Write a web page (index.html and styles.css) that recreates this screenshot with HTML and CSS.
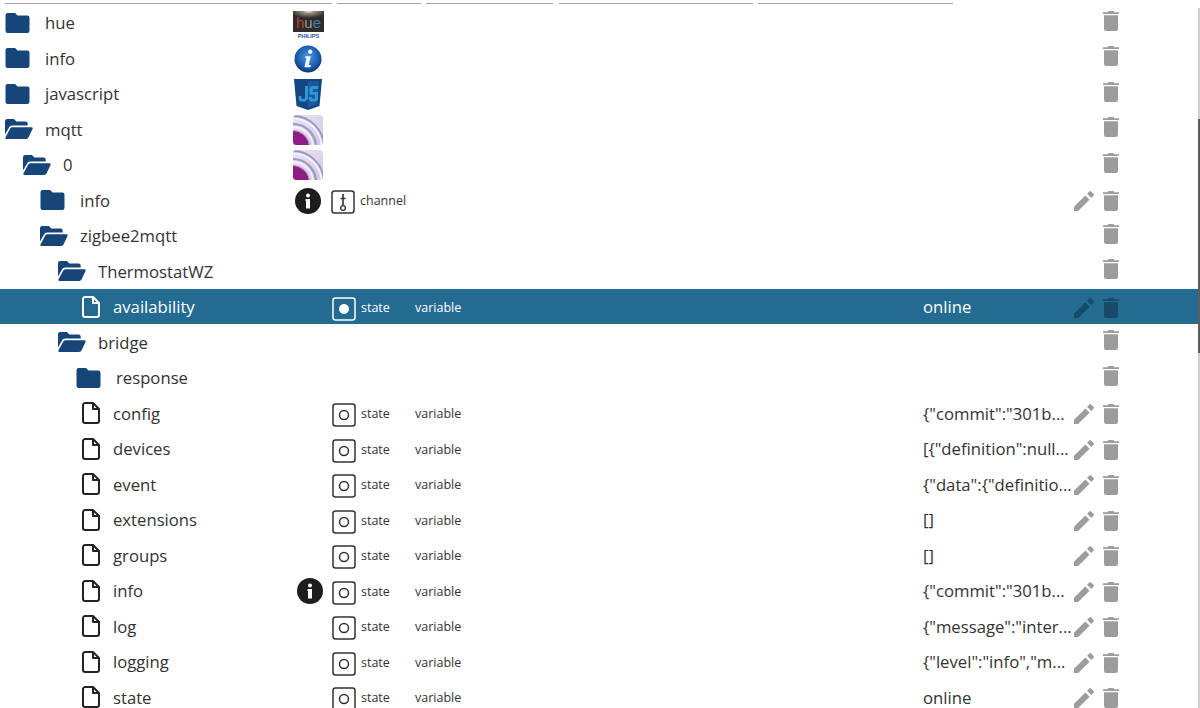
FILE: index.html
```html
<!DOCTYPE html>
<html lang="en">
<head>
<meta charset="utf-8">
<title>Objects</title>
<link rel="stylesheet" href="styles.css">
</head>
<body>
<svg class="defs" width="0" height="0" aria-hidden="true">
  <defs>
    <linearGradient id="mq" x1="0" y1="0" x2="1" y2="1"><stop offset="0" stop-color="#e9e6f3"/><stop offset="1" stop-color="#cfc9e3"/></linearGradient>
    <clipPath id="mqc"><rect width="30" height="30" rx="3.500"/></clipPath>
    <symbol id="folder" viewBox="0 0 24 20"><path d="M2.2 0H9.6l2.4 2.6H21.8A2.2 2.2 0 0 1 24 4.8V17.8A2.2 2.2 0 0 1 21.8 20H2.2A2.2 2.2 0 0 1 0 17.8V2.2A2.2 2.2 0 0 1 2.2 0Z"/></symbol>
    <symbol id="folder-open" viewBox="0 0 28 20"><path d="M0 15.5V2.2A2.2 2.2 0 0 1 2.2 0H9l2.4 2.5H20.5A2.2 2.2 0 0 1 22.7 4.700V6.500H7.200A3.500 3.500 0 0 0 4 8.500Z"/><path d="M7.600 8.200H26.300A1.300 1.300 0 0 1 27.500 10L23.500 18.600A2.600 2.600 0 0 1 21.200 20H1.500A1.200 1.200 0 0 1 .5 18.200L5.300 9.500A2.700 2.700 0 0 1 7.600 8.200Z"/></symbol>
    <symbol id="file" viewBox="0 0 18 22"><path d="M11 1H3.200A2.200 2.200 0 0 0 1 3.200V18.800A2.200 2.200 0 0 0 3.200 21H14.800A2.200 2.200 0 0 0 17 18.800V7ZM11 1V7H17" fill="none" stroke="currentColor" stroke-width="2" stroke-linejoin="round"/></symbol>
    <symbol id="trash" viewBox="0 0 16 20"><path d="M5.500 0H10.500L11.300 1.200H16V2.900H0V1.200H4.700Z"/><path d="M1 4.200H15V17.800A2.200 2.200 0 0 1 12.800 20H3.200A2.200 2.200 0 0 1 1 17.800Z"/></symbol>
    <symbol id="pencil" viewBox="0 0 21 21"><path d="M0 16.600V21H4.400L16.300 9.100 11.900 4.700Z"/><path d="M20.600 4.800A1.200 1.200 0 0 0 20.600 3.100L17.900.4A1.200 1.200 0 0 0 16.200.4L13.700 2.900 18.100 7.300Z"/></symbol>
    <symbol id="info" viewBox="0 0 26 26"><circle cx="13" cy="13" r="13" fill="#1d1d1d"/><circle cx="13" cy="7.500" r="2" fill="#fff"/><path d="M10.500 11H15V20.500H11V13H10.500Z" fill="#fff"/></symbol>
    <symbol id="state" viewBox="0 0 24 24"><rect x="1" y="1" width="22" height="22" rx="2.500" fill="none" stroke="currentColor" stroke-width="1.500"/><circle cx="12" cy="12" r="4.500" fill="none" stroke="currentColor" stroke-width="1.500"/></symbol>
    <symbol id="state-on" viewBox="0 0 24 24"><rect x="1" y="1" width="22" height="22" rx="2.500" fill="none" stroke="currentColor" stroke-width="1.500"/><circle cx="12" cy="12" r="5" fill="currentColor"/></symbol>
    <symbol id="channel" viewBox="0 0 24 24"><rect x="1" y="1" width="22" height="22" rx="2.500" fill="none" stroke="currentColor" stroke-width="1.500"/><circle cx="12" cy="18" r="2.300" fill="none" stroke="currentColor" stroke-width="1.300"/><path d="M12 4V15.500M9.500 8.500H14.500" fill="none" stroke="currentColor" stroke-width="1.600"/></symbol>
    <symbol id="mqtt" viewBox="0 0 30 30">
      <g clip-path="url(#mqc)">
        <rect width="30" height="30" fill="url(#mq)"/>
        <circle cx="0" cy="32" r="31" fill="none" stroke="#9d95c2" stroke-width="1.800"/>
        <circle cx="0" cy="32" r="28.500" fill="none" stroke="#f6f4fb" stroke-width="1.600"/>
        <circle cx="0" cy="32" r="23" fill="none" stroke="#a096c4" stroke-width="2.200"/>
        <circle cx="0" cy="32" r="20" fill="none" stroke="#f3f1f9" stroke-width="1.800"/>
        <circle cx="0" cy="32" r="16" fill="#8d1f84"/>
        <circle cx="0" cy="32" r="16.500" fill="none" stroke="#b78fc4" stroke-width="1"/>
      </g>
    </symbol>
  </defs>
</svg>
<div class="page">
  <div class="head">
    <span class="col-a"></span><span class="col-b"></span><span class="col-c"></span><span class="col-d"></span><span class="col-e"></span>
  </div>
  <div class="tree">
    <div class="row lv0">
      <svg class="ico folder"><use href="#folder"/></svg><span class="name">hue</span>
      <span class="logo">
        <svg class="logo-hue" viewBox="0 0 31 28"><defs><radialGradient id="lamp" cx=".5" cy="0" r=".6"><stop offset="0" stop-color="#f4f1df"/><stop offset=".35" stop-color="#8f8a78"/><stop offset="1" stop-color="#2e2b29"/></radialGradient></defs><rect width="31" height="28" fill="#fbfbfd"/><rect width="31" height="21" fill="#2f2c2a"/><rect width="31" height="12" fill="url(#lamp)"/><text x="15.500" y="16.500" class="hue-word"><tspan class="h-h">h</tspan><tspan class="h-u">u</tspan><tspan class="h-e">e</tspan></text><text x="15.500" y="26.500" class="philips">PHILIPS</text></svg>
      </span>
      <span class="act"><svg class="trash"><use href="#trash"/></svg></span>
    </div>
    <div class="row lv0">
      <svg class="ico folder"><use href="#folder"/></svg><span class="name">info</span>
      <span class="logo">
        <svg class="logo-i" viewBox="0 0 28 28"><defs><radialGradient id="ball" cx=".5" cy=".42" r=".62"><stop offset="0" stop-color="#4a9be6"/><stop offset=".65" stop-color="#1a5cb0"/><stop offset="1" stop-color="#0c2a55"/></radialGradient></defs><circle cx="14" cy="14" r="13.500" fill="url(#ball)"/><path d="M16.200 4.500a2.200 2.200 0 1 0 .01 0ZM11.500 11.200H16.800L14.700 20H17L16.400 22.200H10.400L12.500 13H11Z" fill="#f2f6fb"/></svg>
      </span>
      <span class="act"><svg class="trash"><use href="#trash"/></svg></span>
    </div>
    <div class="row lv0">
      <svg class="ico folder"><use href="#folder"/></svg><span class="name">javascript</span>
      <span class="logo">
        <svg class="logo-js" viewBox="0 0 28 31"><path d="M0 0H28L25.500 27 14 31 2.500 27Z" fill="#14467f"/><path d="M14 2.500H25L23.300 25.500 14 28.500Z" fill="#1a5a9c"/><path d="M11 7H14V20L11.500 22.500H6L4.700 20V17H7.500V19.700H10.500L11 19ZM24 7V10H18.800V13H24V20.500L22 22.500H16.500L15 20.500V18H18V19.700H21V15.800H15.500V9L17.500 7Z" fill="#2e97d4"/></svg>
      </span>
      <span class="act"><svg class="trash"><use href="#trash"/></svg></span>
    </div>
    <div class="row lv0">
      <svg class="ico folder-open"><use href="#folder-open"/></svg><span class="name">mqtt</span>
      <span class="logo"><svg class="logo-mqtt"><use href="#mqtt"/></svg></span>
      <span class="act"><svg class="trash"><use href="#trash"/></svg></span>
    </div>
    <div class="row lv1">
      <svg class="ico folder-open"><use href="#folder-open"/></svg><span class="name">0</span>
      <span class="logo"><svg class="logo-mqtt"><use href="#mqtt"/></svg></span>
      <span class="act"><svg class="trash"><use href="#trash"/></svg></span>
    </div>
    <div class="row lv2 edit">
      <svg class="ico folder"><use href="#folder"/></svg><span class="name">info</span>
      <span class="logo"><svg class="badge"><use href="#info"/></svg></span>
      <span class="kind"><svg class="type"><use href="#channel"/></svg><span class="role">channel</span></span>
      <span class="act"><svg class="pencil"><use href="#pencil"/></svg><svg class="trash"><use href="#trash"/></svg></span>
    </div>
    <div class="row lv2">
      <svg class="ico folder-open"><use href="#folder-open"/></svg><span class="name">zigbee2mqtt</span>
      <span class="act"><svg class="trash"><use href="#trash"/></svg></span>
    </div>
    <div class="row lv3">
      <svg class="ico folder-open"><use href="#folder-open"/></svg><span class="name">ThermostatWZ</span>
      <span class="act"><svg class="trash"><use href="#trash"/></svg></span>
    </div>
    <div class="row lv4 edit selected">
      <svg class="ico file"><use href="#file"/></svg><span class="name">availability</span>
      <span class="kind"><svg class="type"><use href="#state-on"/></svg><span class="role">state</span><span class="vtype">variable</span></span>
      <span class="val">online</span>
      <span class="act"><svg class="pencil"><use href="#pencil"/></svg><svg class="trash"><use href="#trash"/></svg></span>
    </div>
    <div class="row lv3">
      <svg class="ico folder-open"><use href="#folder-open"/></svg><span class="name">bridge</span>
      <span class="act"><svg class="trash"><use href="#trash"/></svg></span>
    </div>
    <div class="row lv4b">
      <svg class="ico folder"><use href="#folder"/></svg><span class="name">response</span>
      <span class="act"><svg class="trash"><use href="#trash"/></svg></span>
    </div>
    <div class="row lv4 edit">
      <svg class="ico file"><use href="#file"/></svg><span class="name">config</span>
      <span class="kind"><svg class="type"><use href="#state"/></svg><span class="role">state</span><span class="vtype">variable</span></span>
      <span class="val">{"commit":"301b...</span>
      <span class="act"><svg class="pencil"><use href="#pencil"/></svg><svg class="trash"><use href="#trash"/></svg></span>
    </div>
    <div class="row lv4 edit">
      <svg class="ico file"><use href="#file"/></svg><span class="name">devices</span>
      <span class="kind"><svg class="type"><use href="#state"/></svg><span class="role">state</span><span class="vtype">variable</span></span>
      <span class="val">[{"definition":null...</span>
      <span class="act"><svg class="pencil"><use href="#pencil"/></svg><svg class="trash"><use href="#trash"/></svg></span>
    </div>
    <div class="row lv4 edit">
      <svg class="ico file"><use href="#file"/></svg><span class="name">event</span>
      <span class="kind"><svg class="type"><use href="#state"/></svg><span class="role">state</span><span class="vtype">variable</span></span>
      <span class="val">{"data":{"definitio...</span>
      <span class="act"><svg class="pencil"><use href="#pencil"/></svg><svg class="trash"><use href="#trash"/></svg></span>
    </div>
    <div class="row lv4 edit">
      <svg class="ico file"><use href="#file"/></svg><span class="name">extensions</span>
      <span class="kind"><svg class="type"><use href="#state"/></svg><span class="role">state</span><span class="vtype">variable</span></span>
      <span class="val">[]</span>
      <span class="act"><svg class="pencil"><use href="#pencil"/></svg><svg class="trash"><use href="#trash"/></svg></span>
    </div>
    <div class="row lv4 edit">
      <svg class="ico file"><use href="#file"/></svg><span class="name">groups</span>
      <span class="kind"><svg class="type"><use href="#state"/></svg><span class="role">state</span><span class="vtype">variable</span></span>
      <span class="val">[]</span>
      <span class="act"><svg class="pencil"><use href="#pencil"/></svg><svg class="trash"><use href="#trash"/></svg></span>
    </div>
    <div class="row lv4 edit">
      <svg class="ico file"><use href="#file"/></svg><span class="name">info</span>
      <span class="logo"><svg class="badge"><use href="#info"/></svg></span>
      <span class="kind"><svg class="type"><use href="#state"/></svg><span class="role">state</span><span class="vtype">variable</span></span>
      <span class="val">{"commit":"301b...</span>
      <span class="act"><svg class="pencil"><use href="#pencil"/></svg><svg class="trash"><use href="#trash"/></svg></span>
    </div>
    <div class="row lv4 edit">
      <svg class="ico file"><use href="#file"/></svg><span class="name">log</span>
      <span class="kind"><svg class="type"><use href="#state"/></svg><span class="role">state</span><span class="vtype">variable</span></span>
      <span class="val">{"message":"inter...</span>
      <span class="act"><svg class="pencil"><use href="#pencil"/></svg><svg class="trash"><use href="#trash"/></svg></span>
    </div>
    <div class="row lv4 edit">
      <svg class="ico file"><use href="#file"/></svg><span class="name">logging</span>
      <span class="kind"><svg class="type"><use href="#state"/></svg><span class="role">state</span><span class="vtype">variable</span></span>
      <span class="val">{"level":"info","m...</span>
      <span class="act"><svg class="pencil"><use href="#pencil"/></svg><svg class="trash"><use href="#trash"/></svg></span>
    </div>
    <div class="row lv4 edit">
      <svg class="ico file"><use href="#file"/></svg><span class="name">state</span>
      <span class="kind"><svg class="type"><use href="#state"/></svg><span class="role">state</span><span class="vtype">variable</span></span>
      <span class="val">online</span>
      <span class="act"><svg class="pencil"><use href="#pencil"/></svg><svg class="trash"><use href="#trash"/></svg></span>
    </div>
  </div>
</div>
<div class="scrollbar"><div class="thumb"></div></div>
</body>
</html>
```

FILE: styles.css
```css
* { box-sizing: border-box; }
html, body { margin: 0; height: 100%; overflow: hidden; background: #fff; }
body { font-family: "Open Sans", "Noto Sans", sans-serif; color: #333; }
.defs { position: absolute; }
.page { height: 708px; width: 1198px; overflow: hidden; }
.scrollbar { position: absolute; top: 8px; bottom: 0; right: 0; width: 2px; background: #cdcdcd; }
.thumb { margin-top: 111px; height: 234px; background: #5c5c5c; }
.head { display: flex; height: 4.900px; padding: 3px 0 0 5px; }
.head span { height: 1px; background: #a6a6a6; margin-right: 5px; }
.col-a { width: 327px; }
.col-b { width: 84px; }
.head .col-c { width: 127px; margin-right: 6px; }
.col-d { width: 194px; }
.col-e { width: 195px; }
.tree { display: grid; grid-auto-rows: 35.5px; }
.row { position: relative; display: flex; align-items: center; font-size: 16.700px; line-height: 1.200; }
.lv0 { padding-left: 5px; }
.lv1 { padding-left: 23px; }
.lv2 { padding-left: 40px; }
.lv3 { padding-left: 58px; }
.lv4 { padding-left: 82px; }
.lv4b { padding-left: 76px; }
.ico { flex: none; fill: #164679; color: #222; }
.folder { width: 25px; height: 20px; margin-right: 15px; }
.folder-open { width: 28px; height: 20px; margin-right: 12px; }
.file { width: 18px; height: 22px; margin-right: 13px; }
.name { white-space: nowrap; margin-top: 1px; }
.logo { position: absolute; left: 290px; top: 0; width: 36px; height: 100%; display: flex; align-items: center; justify-content: center; }
.lv4 .logo { left: 292px; }
.logo-hue { width: 31px; height: 28px; margin-top: 4px; }
.logo-i { width: 28px; height: 28px; margin-top: 1px; }
.logo-js { width: 28px; height: 31px; margin-top: 1px; }
.logo-mqtt { width: 30px; height: 30px; margin-top: 1px; }
.badge { width: 26px; height: 26px; margin-top: 1px; }
.hue-word { font-family: "Liberation Sans", sans-serif; font-size: 15px; text-anchor: middle; }
.h-h { fill: #b5443c; }
.h-u { fill: #8f9c84; }
.h-e { fill: #3f7fb5; }
.philips { font-family: "Liberation Sans", sans-serif; font-size: 5.500px; font-weight: 700; fill: #1f56a0; text-anchor: middle; }
.kind { position: absolute; left: 332px; top: 0; height: 100%; display: flex; align-items: center; font-size: 12.500px; }
.lv2 .kind { left: 331px; }
.type { width: 24px; height: 24px; margin: 4px 5px 0 0; }
.role { width: 54px; margin-top: 1px; }
.vtype { white-space: nowrap; margin-top: 1px; }
.val { position: absolute; left: 923px; top: 0; height: 100%; display: flex; align-items: center; white-space: nowrap; padding-top: 1px; }
.act { position: absolute; right: 0; top: -2px; height: 100%; width: 130px; display: flex; align-items: center; }
.edit .act { top: 1px; }
.pencil { position: absolute; left: 6px; width: 20px; height: 20px; fill: #9c9c9c; }
.trash { position: absolute; left: 35px; width: 16px; height: 20px; fill: #9c9c9c; }
.selected { background: #236b90; color: #fff; }
.selected .ico { color: #fff; }
.selected .pencil, .selected .trash { fill: #164a68; }
```
